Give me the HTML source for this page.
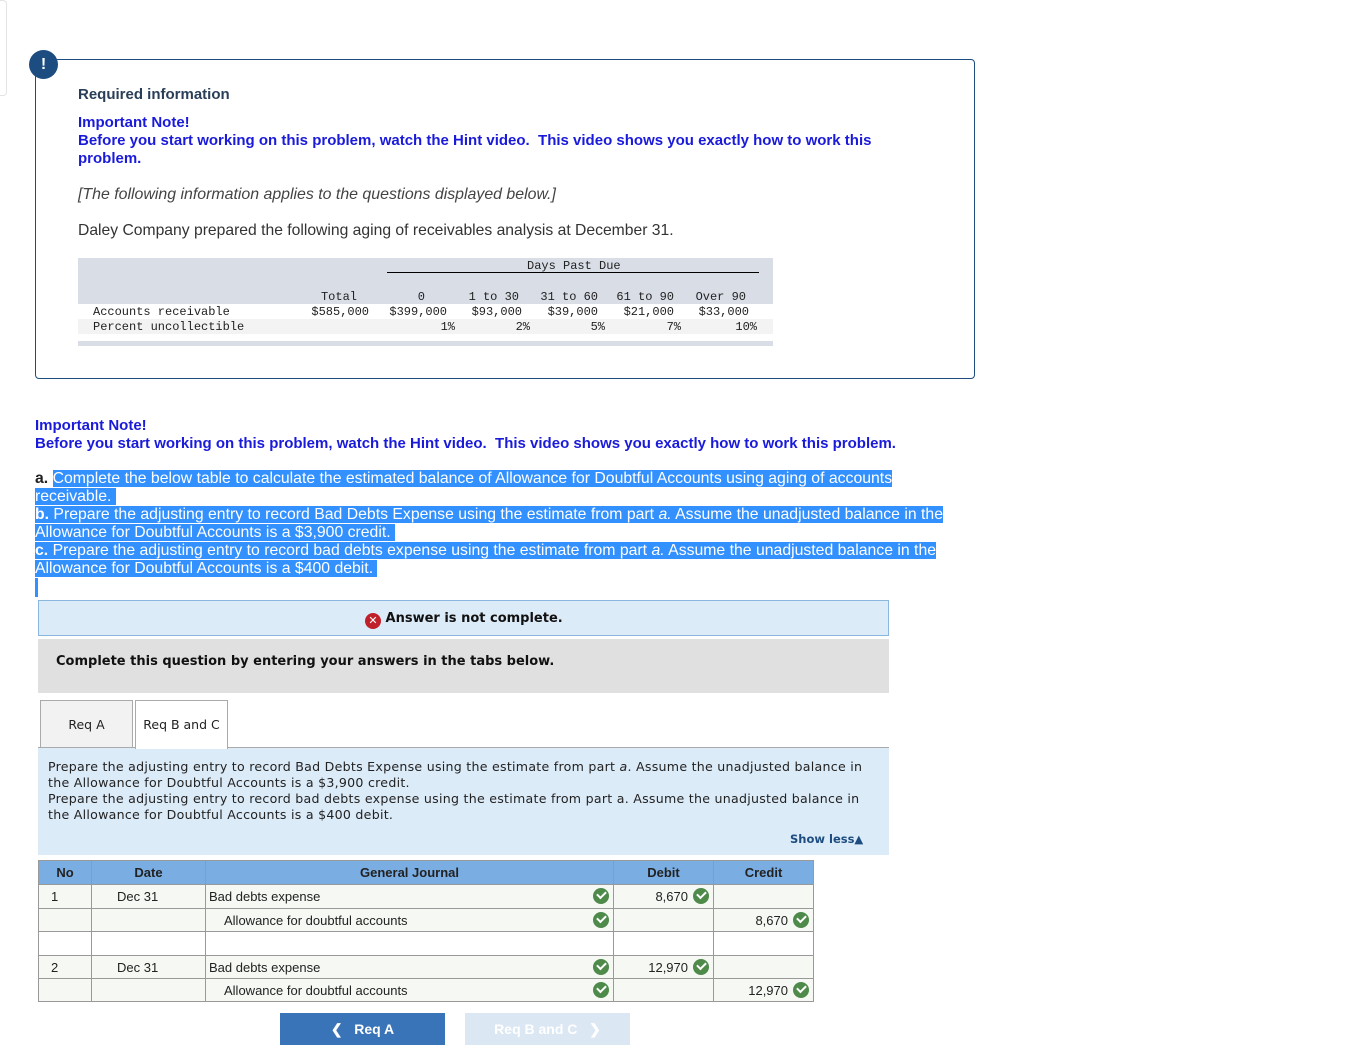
<!DOCTYPE html>
<html><head><meta charset="utf-8"><style>
*{margin:0;padding:0;box-sizing:border-box}
body{width:1353px;height:1060px;background:#fff;position:relative;font-family:"Liberation Sans",sans-serif;overflow:hidden}
.a{position:absolute;white-space:nowrap}
.m{position:absolute;white-space:nowrap;font-family:"Liberation Mono",monospace;font-size:12px;color:#222;line-height:15px}
.r{transform:translateX(-100%)}
.blue{color:#1a1adb;font-weight:bold;font-size:15px}
.sel{background:#3390ff;color:#fff}
.v{font-family:"DejaVu Sans",Verdana,sans-serif}
.ck{display:inline-block;width:16px;height:16px;border-radius:50%;background:#4e8a4a;position:absolute}
.ck:after{content:"";position:absolute;left:4px;top:3px;width:7px;height:4px;border-left:2px solid #fff;border-bottom:2px solid #fff;transform:rotate(-45deg)}
td{border:1px solid #999;font-family:"Liberation Sans",sans-serif;font-size:13px;color:#222;position:relative;padding:0 3px}
table{border-collapse:collapse;position:absolute;left:38px;top:860px}
</style></head><body>
<div class="a" style="left:0;top:0;width:7px;height:96px;border:1px solid #e4e4e4;border-left:none;border-radius:0 4px 4px 0"></div>
<div class="a" style="left:35px;top:59px;width:940px;height:320px;border:1px solid #1d4d80;border-radius:0 4px 4px 4px"></div>
<div class="a" style="left:29px;top:50px;width:29px;height:29px;border-radius:50%;background:#1d4d80;color:#fff;font-weight:bold;font-size:16px;text-align:center;line-height:29px">!</div>
<div class="a" style="left:78px;top:86px;font-size:15px;font-weight:bold;color:#2a3e58">Required information</div>
<div class="a blue" style="left:78px;top:114px;line-height:18px">Important Note!<br>Before you start working on this problem, watch the Hint video.&nbsp; This video shows you exactly how to work this<br>problem.</div>
<div class="a" style="left:78px;top:186px;font-size:15.9px;font-style:italic;color:#444">[The following information applies to the questions displayed below.]</div>
<div class="a" style="left:78px;top:222px;font-size:15.7px;color:#333">Daley Company prepared the following aging of receivables analysis at December 31.</div>
<div class="a" style="left:78px;top:258px;width:695px;height:46px;background:#d9dde6"></div>
<div class="a" style="left:78px;top:319px;width:695px;height:15px;background:#f3f3f3"></div>
<div class="a" style="left:78px;top:341px;width:695px;height:5px;background:#d9dde6"></div>
<div class="a" style="left:387px;top:272px;width:372px;height:1px;background:#000"></div>
<div class="m" style="left:527px;top:259px">Days Past Due</div>
<div class="m r" style="left:357px;top:290px">Total</div>
<div class="m r" style="left:425px;top:290px">0</div>
<div class="m r" style="left:519px;top:290px">1 to 30</div>
<div class="m r" style="left:598px;top:290px">31 to 60</div>
<div class="m r" style="left:674px;top:290px">61 to 90</div>
<div class="m r" style="left:746px;top:290px">Over 90</div>
<div class="m" style="left:93px;top:305px">Accounts receivable</div>
<div class="m r" style="left:369px;top:305px">$585,000</div>
<div class="m r" style="left:447px;top:305px">$399,000</div>
<div class="m r" style="left:522px;top:305px">$93,000</div>
<div class="m r" style="left:598px;top:305px">$39,000</div>
<div class="m r" style="left:674px;top:305px">$21,000</div>
<div class="m r" style="left:749px;top:305px">$33,000</div>
<div class="m" style="left:93px;top:320px">Percent uncollectible</div>
<div class="m r" style="left:455px;top:320px">1%</div>
<div class="m r" style="left:530px;top:320px">2%</div>
<div class="m r" style="left:605px;top:320px">5%</div>
<div class="m r" style="left:681px;top:320px">7%</div>
<div class="m r" style="left:757px;top:320px">10%</div>
<div class="a blue" style="left:35px;top:417px;line-height:18px">Important Note!<br>Before you start working on this problem, watch the Hint video.&nbsp; This video shows you exactly how to work this problem.</div>
<div class="a" style="left:35px;top:470px;font-size:15.8px;line-height:18px;color:#fff">
<div><b style="color:#222">a.</b> <span class="sel">Complete the below table to calculate the estimated balance of Allowance for Doubtful Accounts using aging of accounts </span></div>
<div><span class="sel">receivable.&nbsp;</span></div>
<div><span class="sel"><b>b.</b> Prepare the adjusting entry to record Bad Debts Expense using the estimate from part <i>a.</i> Assume the unadjusted balance in the </span></div>
<div><span class="sel">Allowance for Doubtful Accounts is a $3,900 credit.&nbsp;</span></div>
<div><span class="sel"><b>c.</b> Prepare the adjusting entry to record bad debts expense using the estimate from part <i>a.</i> Assume the unadjusted balance in the </span></div>
<div><span class="sel">Allowance for Doubtful Accounts is a $400 debit.&nbsp;</span></div>
</div>
<div class="a" style="left:35px;top:578px;width:3px;height:19px;background:#3390ff"></div>
<div class="a" style="left:38px;top:600px;width:851px;height:36px;background:#dcebf8;border:1px solid #8ab6e0"></div>
<div class="a v" style="left:365px;top:611px;font-size:13px;font-weight:bold;color:#111"><span style="display:inline-block;width:16px;height:16px;border-radius:50%;background:#c0202a;color:#fff;font-size:11px;text-align:center;line-height:16px;vertical-align:-2px">✕</span> Answer is not complete.</div>
<div class="a" style="left:38px;top:639px;width:851px;height:54px;background:#e0e0e0"></div>
<div class="a v" style="left:56px;top:654px;font-size:13px;font-weight:bold;color:#111">Complete this question by entering your answers in the tabs below.</div>
<div class="a v" style="left:40px;top:700px;width:93px;height:48px;background:#f2f2f2;border:1px solid #aaa;font-size:12.5px;text-align:center;line-height:48px;color:#222">Req A</div>
<div class="a v" style="left:135px;top:700px;width:93px;height:49px;background:#fff;border:1px solid #aaa;border-bottom:none;font-size:12.5px;text-align:center;line-height:48px;color:#222;z-index:2">Req B and C</div>
<div class="a" style="left:38px;top:747px;width:851px;height:108px;background:#dcebf8;border-top:1px solid #aaa"></div>
<div class="a v" style="left:48px;top:759px;font-size:12.6px;line-height:16px;color:#222;letter-spacing:0.26px">Prepare the adjusting entry to record Bad Debts Expense using the estimate from part <i>a</i>. Assume the unadjusted balance in<br>the Allowance for Doubtful Accounts is a $3,900 credit.<br>Prepare the adjusting entry to record bad debts expense using the estimate from part a. Assume the unadjusted balance in<br>the Allowance for Doubtful Accounts is a $400 debit.</div>
<div class="a v" style="left:790px;top:832px;font-size:11.5px;font-weight:bold;color:#1d4d80">Show less▲</div>
<table>
<tr style="height:24px;background:#7aaee3"><td style="width:53px;text-align:center;font-weight:bold">No</td><td style="width:114px;text-align:center;font-weight:bold">Date</td><td style="width:408px;text-align:center;font-weight:bold">General Journal</td><td style="width:100px;text-align:center;font-weight:bold">Debit</td><td style="width:100px;text-align:center;font-weight:bold">Credit</td></tr>
<tr style="height:24px;background:#f5f8f3"><td style="padding-left:12px">1</td><td style="padding-left:25px">Dec 31</td><td>Bad debts expense<span class="ck" style="right:4px;top:3px"></span></td><td style="text-align:right;padding-right:25px">8,670<span class="ck" style="right:4px;top:3px"></span></td><td></td></tr>
<tr style="height:23px;background:#f5f8f3"><td></td><td></td><td style="padding-left:18px">Allowance for doubtful accounts<span class="ck" style="right:4px;top:3px"></span></td><td></td><td style="text-align:right;padding-right:25px">8,670<span class="ck" style="right:4px;top:3px"></span></td></tr>
<tr style="height:24px"><td></td><td></td><td></td><td></td><td></td></tr>
<tr style="height:23px;background:#f5f8f3"><td style="padding-left:12px">2</td><td style="padding-left:25px">Dec 31</td><td>Bad debts expense<span class="ck" style="right:4px;top:3px"></span></td><td style="text-align:right;padding-right:25px">12,970<span class="ck" style="right:4px;top:3px"></span></td><td></td></tr>
<tr style="height:23px;background:#f5f8f3"><td></td><td></td><td style="padding-left:18px">Allowance for doubtful accounts<span class="ck" style="right:4px;top:3px"></span></td><td></td><td style="text-align:right;padding-right:25px">12,970<span class="ck" style="right:4px;top:3px"></span></td></tr>
</table>
<div class="a" style="left:280px;top:1013px;width:165px;height:32px;background:#3a74b8;color:#fff;font-weight:bold;font-size:14px;text-align:center;line-height:32px">❮&nbsp;&nbsp; Req A</div>
<div class="a" style="left:465px;top:1013px;width:165px;height:32px;background:#dce7f4;color:#fff;font-weight:bold;font-size:14px;text-align:center;line-height:32px">Req B and C &nbsp;&nbsp;❯</div>
</body></html>
